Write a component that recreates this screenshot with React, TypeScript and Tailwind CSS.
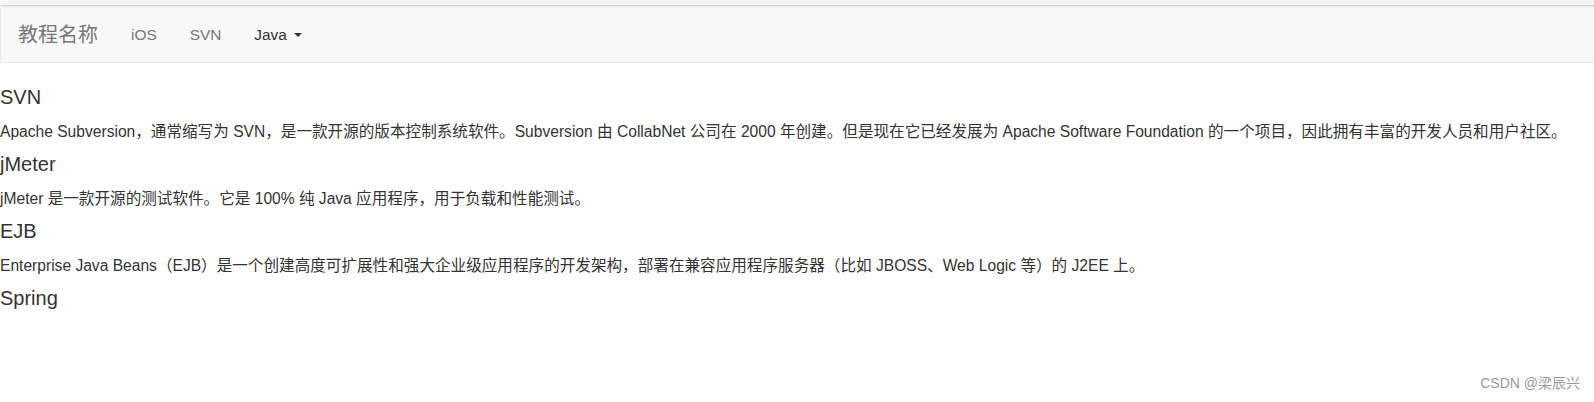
import React from "react";

const font = { fontFamily: '"Liberation Sans", "Noto Sans CJK SC", Arial, sans-serif' };

export default function App() {
  const items = [
    {
      title: "SVN",
      text: "Apache Subversion，通常缩写为 SVN，是一款开源的版本控制系统软件。Subversion 由 CollabNet 公司在 2000 年创建。但是现在它已经发展为 Apache Software Foundation 的一个项目，因此拥有丰富的开发人员和用户社区。",
    },
    { title: "jMeter", text: "jMeter 是一款开源的测试软件。它是 100% 纯 Java 应用程序，用于负载和性能测试。" },
    {
      title: "EJB",
      text: "Enterprise Java Beans（EJB）是一个创建高度可扩展性和强大企业级应用程序的开发架构，部署在兼容应用程序服务器（比如 JBOSS、Web Logic 等）的 J2EE 上。",
    },
    { title: "Spring", text: "" },
  ];
  return (
    <div className="relative h-[402px] w-full overflow-hidden bg-white text-[#333]" style={font}>
      <div className="h-[5px] bg-[#f5f6f8]" />
      <div className="h-px bg-[#d4d4d4]" />
      <nav className="flex h-[57px] items-stretch rounded-l-[4px] border-y border-l border-[#e7e7e7] bg-[#f8f8f8]">
        <a className="flex items-center pl-[17px] pr-[16.5px] text-[20px] leading-[22px] text-[#777]">教程名称</a>
        <a className="flex items-center px-[16.5px] text-[15.4px] text-[#777]">iOS</a>
        <a className="flex items-center px-[16.5px] text-[15.4px] text-[#777]">SVN</a>
        <a className="flex items-center px-[16.5px] text-[15.4px] text-[#333]">
          Java
          <span className="ml-[7px] inline-block h-0 w-0 border-x-[4.4px] border-t-[4.4px] border-x-transparent border-t-[#333]" />
        </a>
      </nav>
      <div className="mt-[23px]">
        {items.map((it, i) => (
          <div key={i}>
            <h4 className="text-[20px] leading-[22px] font-normal">{it.title}</h4>
            {it.text && <p className="mt-[13.3px] mb-[9.3px] text-[15.6px] leading-[22.5px]">{it.text}</p>}
          </div>
        ))}
      </div>
      <div className="absolute right-[14px] bottom-[8px] text-[14px] text-[#999]">CSDN @梁辰兴</div>
    </div>
  );
}
